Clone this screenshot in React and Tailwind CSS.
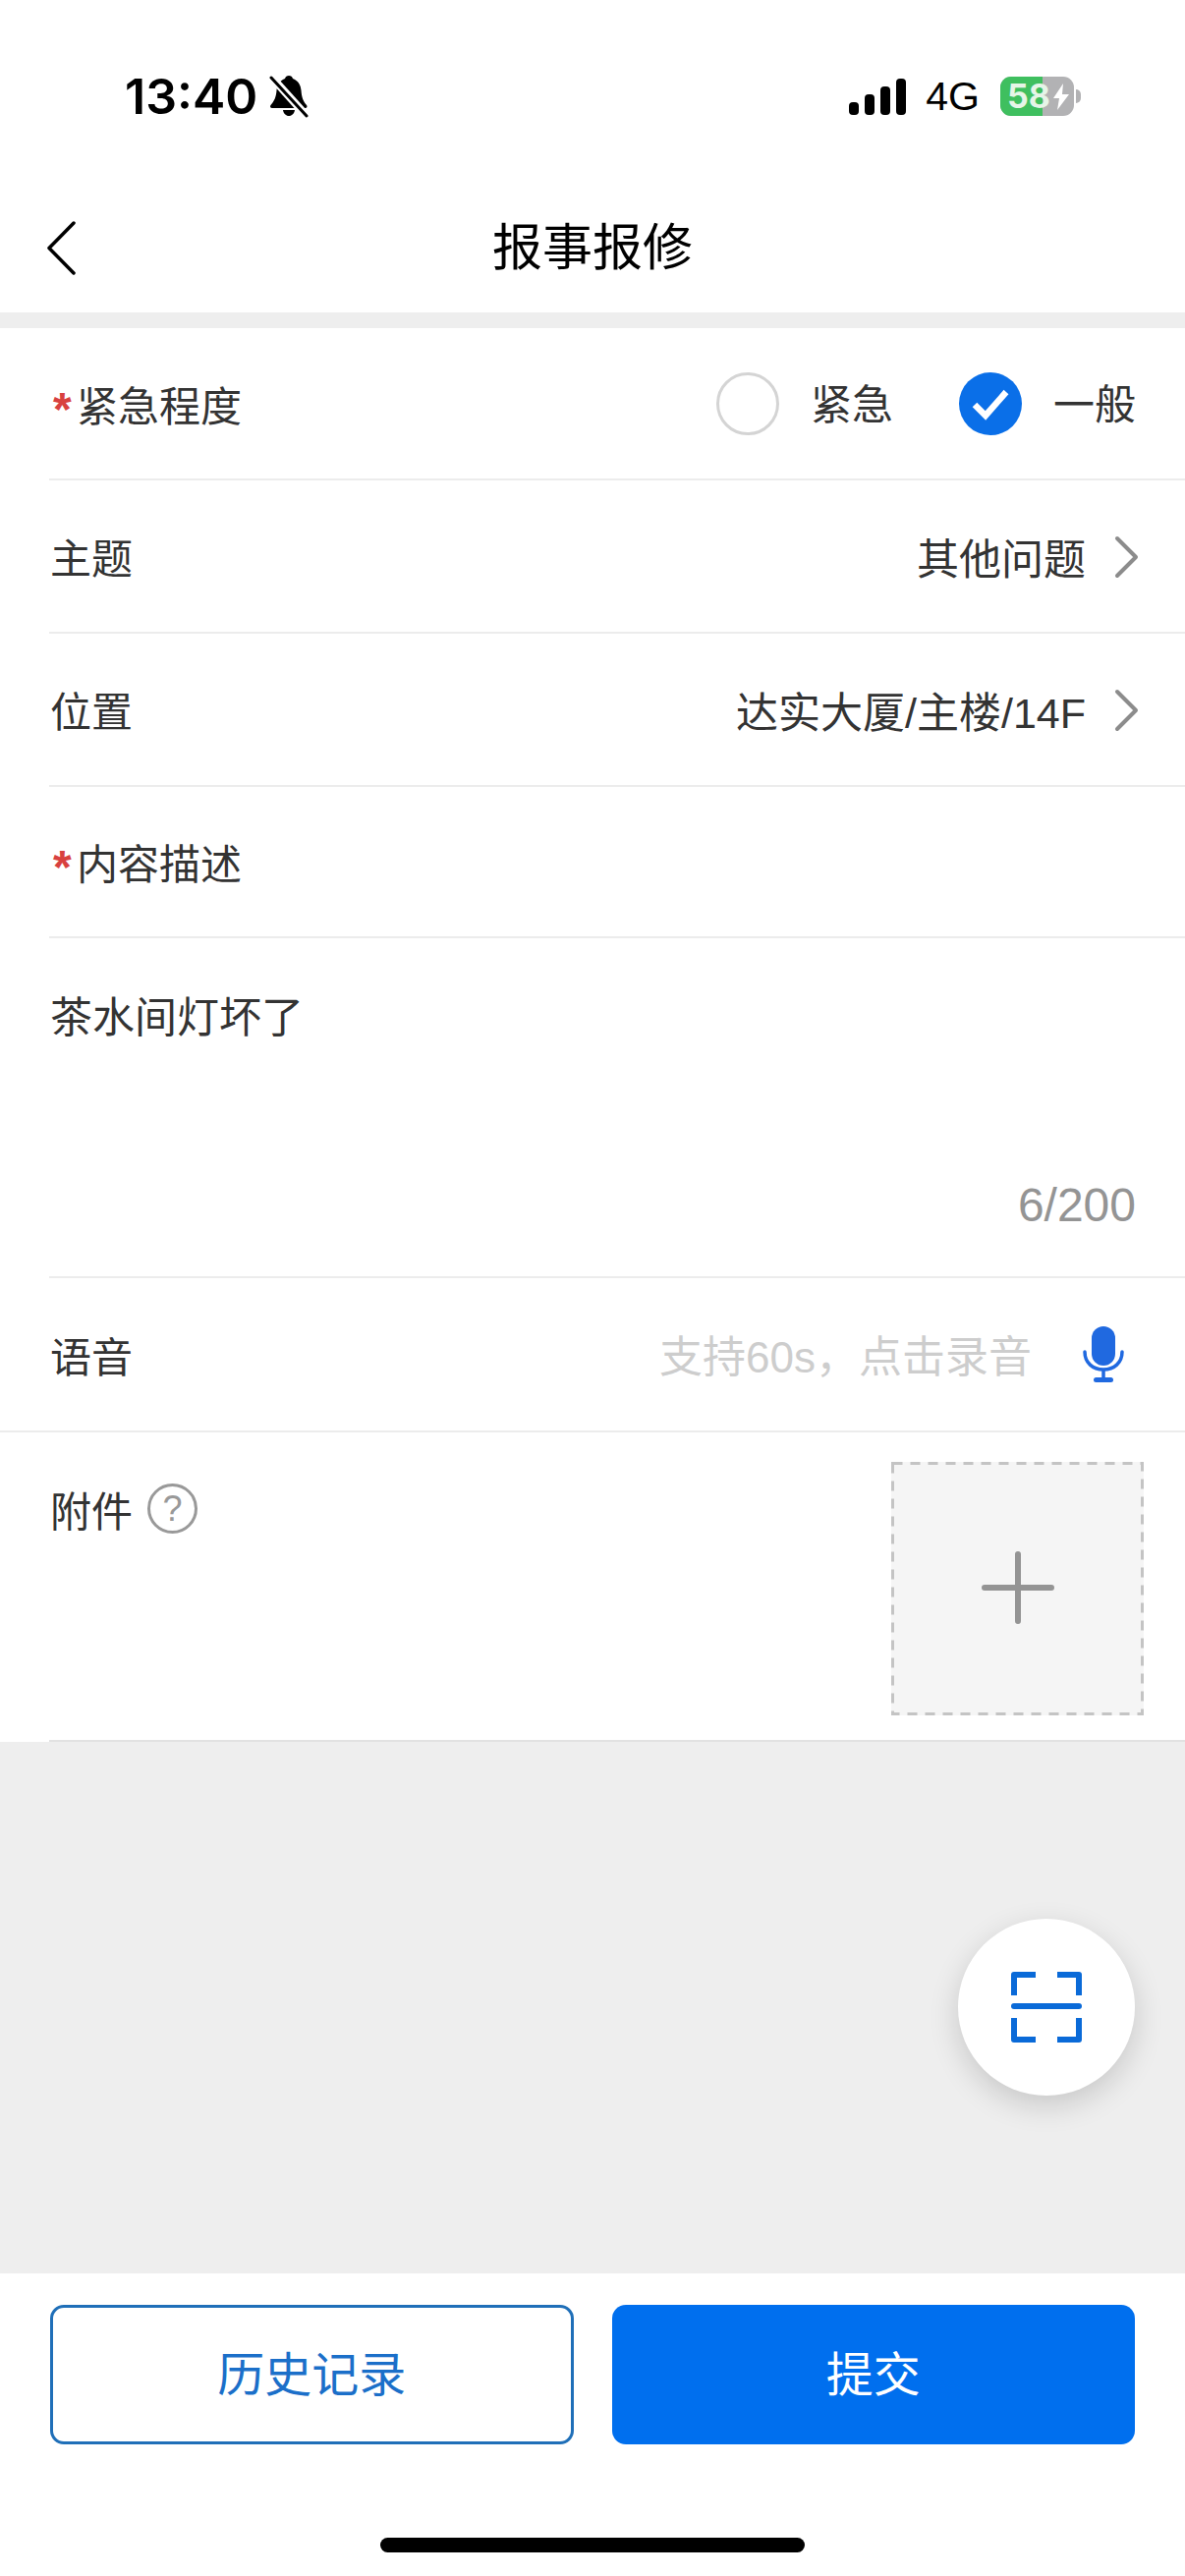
const cjk = "font-['Liberation_Sans','Noto_Sans_CJK_SC',sans-serif]";

// Status bar glyphs
function MutedBell() {
  return (
    <svg width="40" height="44" viewBox="0 0 40 44" className="ml-[12px]">
      <path d="M20 1c2 0 3.500 1.300 4 3C30 6.500 32 11 32.500 16c.5 7 2 11 5.500 15 1 1.500 .5 3-1.500 3H3c-2 0-2.500-1.500-1.500-3C5 27 7 23 7.500 16 8 11 10 6.500 16 4c.5-1.700 2-3 4-3z" fill="#000" />
      <path d="M14 36h12c-.5 3.500-3 6-6 6s-5.500-2.500-6-6z" fill="#000" />
      <path d="M1 1l37 41" stroke="#fff" strokeWidth="8" />
      <path d="M2 3l36 39" stroke="#000" strokeWidth="3" strokeLinecap="round" />
    </svg>
  );
}

function SignalBars() {
  return (
    <svg width="58" height="37" viewBox="0 0 58 37">
      <rect x="0" y="24" width="10" height="13" rx="4" fill="#000" />
      <rect x="16" y="16" width="10" height="21" rx="4" fill="#000" />
      <rect x="32" y="8" width="10" height="29" rx="4" fill="#000" />
      <rect x="48" y="0" width="10" height="37" rx="4" fill="#000" />
    </svg>
  );
}

function Battery() {
  return (
    <div className="flex items-center">
      <div className="relative h-[40px] w-[75px] overflow-hidden rounded-[11px] bg-[#b2b2b4]">
        <div className="h-full w-[43px] bg-[#3fbf5f]" />
        <span className="absolute left-[7px] top-0 text-[34px] leading-[40px] font-bold text-[#e6f5e8] font-['Inter',sans-serif]">58</span>
        <svg width="16" height="27" viewBox="0 0 16 27" className="absolute right-[5px] top-[7px]">
          <path d="M10 0L0 15h6L4 27l12-16H9l1-11z" fill="#fff" />
        </svg>
      </div>
      <div className="ml-[2px] h-[14px] w-[5px] rounded-r-full bg-[#b2b2b4]" />
    </div>
  );
}

function Row({ children, className = '' }) {
  return (
    <div className={`ml-[50px] flex items-center justify-between border-b-2 border-[#ececec] pr-[47px] ${className}`}>
      {children}
    </div>
  );
}

function Label({ required, children }) {
  return (
    <span className={`mt-[8px] flex items-center text-[42px] leading-none text-[#333] ${required ? '' : 'ml-[1px]'}`}>
      {required && <span className="ml-[4px] w-[24px] translate-y-[2px] text-[48px] leading-none font-bold text-[#d8413f]">*</span>}
      {children}
    </span>
  );
}

function Choice({ checked, children, className = '' }) {
  return (
    <div className={`flex items-center gap-[32px] ${className}`}>
      {checked ? (
        <span className="flex h-[64px] w-[64px] items-center justify-center rounded-full bg-[#0a6fe8]">
          <svg width="64" height="64" viewBox="0 0 64 64" fill="none">
            <path d="M16 33l11 11 21-24" stroke="#fff" strokeWidth="6.500" />
          </svg>
        </span>
      ) : (
        <span className="h-[64px] w-[64px] rounded-full border-[3px] border-[#d4d4d4]" />
      )}
      <span className="mt-[4px] text-[42px] leading-none text-[#333]">{children}</span>
    </div>
  );
}

function ValueLink({ children }) {
  return (
    <div className="mt-[8px] flex items-center gap-[29px]">
      <span className="text-[43px] leading-none text-[#333]">{children}</span>
      <svg width="25" height="44" viewBox="0 0 25 44" fill="none" className="-mt-[6px]">
        <path d="M3 3l19 19L3 41" stroke="#8c8c8c" strokeWidth="4" strokeLinecap="round" strokeLinejoin="round" />
      </svg>
    </div>
  );
}

export default function App() {
  return (
    <div className={`flex h-[2622px] w-[1206px] flex-col overflow-hidden bg-[#eeeeee] ${cjk}`}>
      <div className="shrink-0 bg-white">
        <div className="flex h-[190px] items-start justify-between pl-[127px] pr-[106px] pt-[71px]">
          <div className="flex h-[54px] items-center">
            <span className="text-[50px] leading-[54px] font-semibold text-black font-['Inter',sans-serif]">13:40</span>
            <MutedBell />
          </div>
          <div className="flex h-[54px] items-center">
            <SignalBars />
            <span className="ml-[20px] text-[41px] leading-[44px] text-black">4G</span>
            <span className="w-[21px]" />
            <Battery />
          </div>
        </div>
        <div className="relative flex h-[128px] items-start justify-center pt-[34px]">
          <svg width="31" height="55" viewBox="0 0 31 55" fill="none" className="absolute left-[47px] top-[35px]">
            <path d="M28 2L3 27.500 28 53" stroke="#000" strokeWidth="3.500" strokeLinecap="round" strokeLinejoin="round" />
          </svg>
          <h1 className="text-[51px] leading-[58px] font-normal text-black">报事报修</h1>
        </div>
      </div>

      <div className="mt-[16px] shrink-0 bg-white">
        <Row className="h-[155px]">
          <Label required>紧急程度</Label>
          <div className="mr-[3px] flex items-center">
            <Choice>紧急</Choice>
            <Choice checked className="ml-[67px]">一般</Choice>
          </div>
        </Row>
        <Row className="h-[156px]">
          <Label>主题</Label>
          <ValueLink>其他问题</ValueLink>
        </Row>
        <Row className="h-[156px]">
          <Label>位置</Label>
          <ValueLink>达实大厦/主楼/14F</ValueLink>
        </Row>
        <Row className="h-[154px]">
          <Label required>内容描述</Label>
        </Row>
        <div className="ml-[50px] flex h-[346px] flex-col justify-between border-b-2 border-[#ececec] pb-[48px] pr-[50px] pt-[59px]">
          <p className="ml-[1px] text-[43px] leading-[44px] text-[#333]">茶水间灯坏了</p>
          <p className="text-right text-[48px] leading-[48px] text-[#949494]">6/200</p>
        </div>
        <div className="flex h-[157px] items-center justify-between border-b-2 border-[#ececec] pl-[50px] pr-[62px]">
          <Label>语音</Label>
          <div className="flex items-center gap-[52px]">
            <span className="mt-[6px] text-[44px] leading-none text-[#cdcdcd]">支持60s，点击录音</span>
            <svg width="42" height="58" viewBox="0 0 42 58">
              <rect x="9" y="0" width="24" height="40" rx="12" fill="#2069e0" />
              <path d="M2 26c0 11 8 18 19 18s19-7 19-18" fill="none" stroke="#2069e0" strokeWidth="3.500" strokeLinecap="round" />
              <path d="M21 44v10" stroke="#2069e0" strokeWidth="3.500" />
              <rect x="11" y="52" width="20" height="5" rx="2.500" fill="#2069e0" />
            </svg>
          </div>
        </div>
        <div className="flex h-[313px] items-start justify-between pl-[50px] pr-[42px] pt-[30px]">
          <div className="mt-[22px] flex items-center gap-[15px]">
            <Label>附件</Label>
            <span className="flex h-[51px] w-[51px] items-center justify-center rounded-full border-[3px] border-[#999] text-[36px] leading-none text-[#999]">?</span>
          </div>
          <div className="relative flex h-[258px] w-[257px] items-center justify-center bg-[#f5f5f5]">
            <svg width="257" height="258" viewBox="0 0 257 258" fill="none" className="absolute inset-0">
              <rect x="1.500" y="1.500" width="254" height="255" stroke="#c4c4c4" strokeWidth="3" strokeDasharray="10 8" />
            </svg>
            <svg width="74" height="74" viewBox="0 0 74 74" className="-mt-[3px]">
              <path d="M3 37h68M37 3v68" stroke="#949494" strokeWidth="6" strokeLinecap="round" />
            </svg>
          </div>
        </div>
        <div className="ml-[50px] h-[2px] bg-[#e2e2e2]" />
      </div>

      <div className="relative flex-1">
        <div className="absolute left-[975px] top-[180px] flex h-[180px] w-[180px] items-center justify-center rounded-full bg-white shadow-[0_10px_30px_rgba(0,0,0,0.16)]">
          <svg width="72" height="72" viewBox="0 0 72 72" fill="none" stroke="#0a6ad8" strokeWidth="6">
            <path d="M3 24V3h22M47 3h22v21M3 47v22h22M47 69h22V47" strokeLinejoin="round" />
            <path d="M3 35h66" strokeLinecap="round" />
          </svg>
        </div>
      </div>

      <div className="h-[308px] shrink-0 bg-white">
        <div className="grid grid-cols-2 gap-[39px] px-[51px] pt-[32px]">
          <button className="h-[142px] rounded-[14px] border-[3px] border-[#1f6fb8] bg-white pt-[2px] text-[48px] text-[#1b6fc9]">历史记录</button>
          <button className="h-[142px] rounded-[14px] bg-[#006fee] pt-[2px] text-[48px] text-white">提交</button>
        </div>
        <div className="mx-auto mt-[95px] h-[15px] w-[432px] rounded-full bg-black" />
      </div>
    </div>
  );
}
